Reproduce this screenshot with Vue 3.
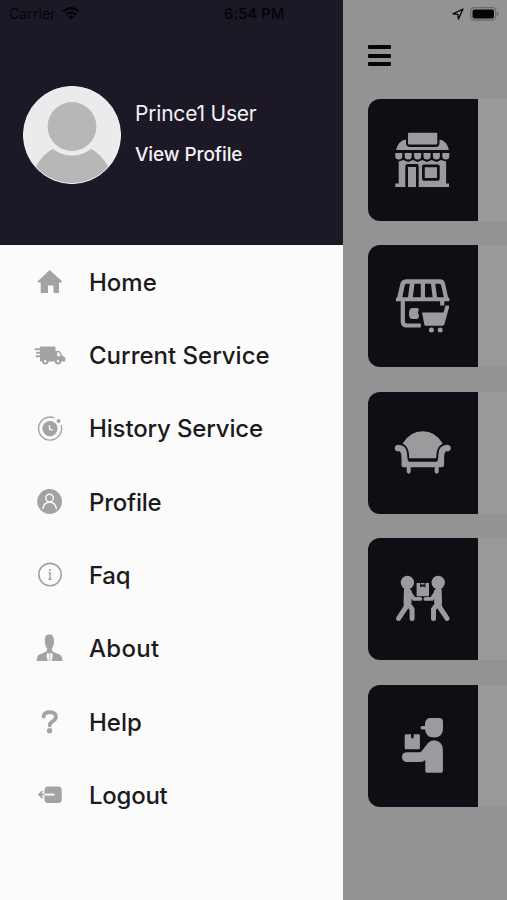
<template>
  <div class="screen">
    <div class="status-bar">
      <span class="carrier">Carrier</span>
      <svg class="wifi" viewBox="0 0 18 13">
        <path d="M1 4.6Q9-2.2 17 4.6M3.8 7.6Q9 3.2 14.2 7.6" fill="none" stroke="currentColor" stroke-width="2.4" />
        <path d="M5.9 9.6Q9 7.2 12.1 9.6L9 12.8z" fill="currentColor" />
      </svg>
      <span class="time">6:54 PM</span>
      <svg class="location" viewBox="0 0 12 12">
        <path d="M11 1L1 5.8l4.9.6.5 4.7z" fill="none" stroke="currentColor" stroke-width="1.3" stroke-linejoin="round" />
      </svg>
      <svg class="battery" viewBox="0 0 29 14">
        <rect x="0.7" y="0.7" width="25" height="12.4" rx="3.6" fill="none" stroke="#6a6a6a" stroke-width="1.2" />
        <rect x="2.5" y="2.4" width="21.5" height="9" rx="2" fill="currentColor" />
        <path d="M27 4.6q3 2.2 0 4.6z" fill="#6a6a6a" />
      </svg>
    </div>

    <aside class="drawer">
      <div class="drawer-header">
        <div class="avatar">
          <svg viewBox="0 0 96 96">
            <circle cx="48" cy="97" r="40" fill="#b6b7b9" />
            <circle cx="48" cy="39.500" r="29.300" fill="#e9ebec" />
            <circle cx="48" cy="39.500" r="24.400" fill="#b6b7b9" />
          </svg>
        </div>
        <div class="user-info">
          <div class="user-name">Prince1 User</div>
          <div class="view-profile">View Profile</div>
        </div>
      </div>

      <nav class="menu">
        <div v-for="item in menuItems" :key="item.name" class="menu-item">
          <svg class="menu-icon" viewBox="0 0 32 32">
            <g v-if="item.icon === 'home'">
              <path d="M15.7 4L27.7 15q.8 1.4-.7 1.6h-2V26q0 1-1 1h-4.500v-7.600h-5.500V27H7.700q-1 0-1-1v-9.400h-2Q3 16.300 4 15z" fill="#a3a3a5" />
            </g>
            <g v-else-if="item.icon === 'truck'">
              <path d="M6 7.500q0-1 1-1h13.500q1 0 1 1V11h4.200l3 5 2.300 1.300q.5.600.3 4.200H6z" fill="#a3a3a5" />
              <path d="M1.600 9.200h6M3 12.700h5M2.600 16.200h6" stroke="#a3a3a5" stroke-width="2.100" stroke-linecap="round" />
              <path d="M23.200 12.300h1.600l2 3.800h-3.600z" fill="#fbfbfb" />
              <g fill="#fbfbfb" stroke="#a3a3a5" stroke-width="2"><circle cx="11.300" cy="21.300" r="2.200" /><circle cx="24" cy="21.300" r="2.200" /></g>
            </g>
            <g v-else-if="item.icon === 'history'">
              <path d="M20.300 4.900A11.500 11.500 0 1 0 27 12" fill="none" stroke="#a3a3a5" stroke-width="1.400" />
              <circle cx="24.600" cy="8" r="1.900" fill="#a3a3a5" />
              <circle cx="16" cy="15.600" r="7.600" fill="#a3a3a5" />
              <path d="M15.500 12v4.200l3.300 1" fill="none" stroke="#fbfbfb" stroke-width="1.300" />
            </g>
            <g v-else-if="item.icon === 'profile'">
              <circle cx="15.600" cy="15.500" r="12.400" fill="#a3a3a5" />
              <g fill="none" stroke="#fbfbfb" stroke-width="1.400" stroke-linecap="round"><circle cx="15.600" cy="12" r="3.800" /><path d="M8.800 22.500q1-6.300 6.800-6.300t6.800 6.300" /></g>
            </g>
            <g v-else-if="item.icon === 'info'">
              <circle cx="16" cy="15.600" r="11.200" fill="none" stroke="#a3a3a5" stroke-width="1.600" />
              <circle cx="16" cy="11" r="1.100" fill="#a3a3a5" />
              <path d="M14.600 13.700H16v6.500M14.200 20.400h3.600" fill="none" stroke="#a3a3a5" stroke-width="1.400" />
            </g>
            <g v-else-if="item.icon === 'person'">
              <path d="M11.200 3.500Q13 1 16 1.800L17.300 1l.6 1.300q2.500 1.700 1.900 6.200 1 .5-.4 3.500-.3 2.200-1.600 3.200.2 3.500 2.400 4l6 2.600q2 1.500 2.200 6.200H2.700q.1-4.700 2.300-6.200l6-2.600q2.200-.7 2.200-4-1.500-1-1.800-3.200-1.300-2.500-.4-3.500-.5-3 .2-5z" fill="#a3a3a5" />
              <path d="M13.400 19.500l2.300 1.700 2.200-1.700.9 3.500-1.500 6h-3.300l-1.500-6z" fill="#fbfbfb" />
              <path d="M14.900 20.800h1.600l-.4 2 .6 4.500-1.100 1.500-1.100-1.500.7-4.500z" fill="#cfcfd1" />
            </g>
            <g v-else-if="item.icon === 'question'">
              <path d="M9.600 10.500q.6-4.300 6.100-4.300 6.200 0 6.200 4.600 0 2.700-3.300 4.500-2.900 1.600-2.900 4.100" fill="none" stroke="#a3a3a5" stroke-width="3.800" stroke-linecap="round" />
              <circle cx="15.600" cy="24.700" r="2.700" fill="#a3a3a5" />
            </g>
            <g v-else>
              <rect x="10.500" y="7.600" width="17.200" height="16.400" rx="3.500" fill="#a3a3a5" />
              <path d="M7 15.600h13.500" stroke="#fbfbfb" stroke-width="2" />
              <path d="M10.500 15.600H5M8.600 12.100L5 15.600l3.600 3.500" fill="none" stroke="#a3a3a5" stroke-width="1.700" />
            </g>
          </svg>
          <span class="menu-label" :class="item.icon">{{ item.name }}</span>
        </div>
      </nav>
    </aside>

    <main class="page">
      <div class="hamburger"><i></i><i></i><i></i></div>
      <div class="cards">
        <div v-for="card in cards" :key="card" class="card">
          <div class="card-icon">
            <svg viewBox="0 0 110 122">
              <g v-if="card === 'store'" fill="#9b9b9d">
                <path d="M38 40.500v3.500q0 4 4 4h25.500q4 0 4-4v-3.500q7 1 9.500 10.500H28q2.500-9.500 10-10.500z" />
                <rect x="40" y="33.800" width="29.300" height="11.600" rx="1" />
                <path d="M27.300 54h7v3a3.500 3.500 0 0 1-7 0zM36.700 54h7v3a3.500 3.500 0 0 1-7 0zM46.100 54h7v3a3.500 3.500 0 0 1-7 0zM55.500 54h7v3a3.500 3.500 0 0 1-7 0zM64.900 54h7v3a3.500 3.500 0 0 1-7 0zM74.300 54h7v3a3.500 3.500 0 0 1-7 0z" />
                <path d="M30.700 62.500l4.700-1.500 4.800 2 4.700-2 4.700 2 4.700-2 4.700 2 4.700-2 4.700 2 4.700-2 5 1.500v22H81V88H27.300v-3.500h3.400z" />
                <path d="M37.300 88V67q0-2 2-2h9.400q2 0 2 2v21z" fill="#0f0e14" />
                <rect x="54" y="65.500" width="17.700" height="16.200" rx="2" fill="#0f0e14" />
                <path d="M40 68h8v20h-8zM56.800 68.200h12.200v10.800H56.800z" />
              </g>
              <g v-else-if="card === 'shop'" fill="#9b9b9d">
                <path d="M39 34.200h33q4 0 5 4l3 13.800q2 1 1.300 4.300H28q-.8-3.300 1.300-4.300L32.500 38q1-3.800 6.500-3.800z" />
                <path d="M38.200 38.700h3.600L40 52.200h-5.700l2.400-11.700q.3-1.600 1.500-1.800zM46.500 38.700h6.300v13.500h-8zM57 38.700h6l1.600 13.500H57zM67.200 38.700h4q1.600.1 2 1.800l2.600 11.700h-6.700z" fill="#0f0e14" />
                <path d="M34.800 55v21.500q0 4 4 4h14M74.200 55v5.500" fill="none" stroke="#9b9b9d" stroke-width="4.200" />
                <path d="M44.500 63h4q2.500 0 2.500 2-2.200 2.500 0 5 0 4-2.500 4h-4q-3.500 0-3.500-5.500t3.500-5.500z" />
                <path d="M54 67.500h21.500l2-7h3.500v2l-4.500 16.500q-.5 1.700-2 1.700H58q-1.500 0-1.700-1.500z" />
                <circle cx="63.400" cy="85" r="2.500" /><circle cx="72.200" cy="85" r="2.500" />
              </g>
              <g v-else-if="card === 'sofa'" fill="#9b9b9d">
                <path d="M34.700 51.500Q42 39.300 54.700 39.300t20 12.200Q68 55 68.200 66.300h-27Q41.500 55 34.700 51.500z" />
                <path d="M30 52.800q9 0 9.200 10 .1 6.900 2 6.900h27.200q1.900 0 1.900-6.900.2-10 9.200-10 3.300.4 3.300 3.600-.7 3.200-4 2.900-2.500 0-2.700 5.700v8q0 2.300-2.300 2.300H70.700v5q-2 2.800-4 0v-5h-24v5q-2 2.800-4 0v-5h-3q-2.200 0-2.200-2.300v-8q-.2-5.700-2.800-5.700-3.300.4-4-2.900 0-3.200 3.300-3.600z" />
              </g>
              <g v-else-if="card === 'movers'" fill="#9b9b9d">
                <g v-for="side in [1, -1]" :key="side" :transform="side === 1 ? '' : 'translate(109.600 0) scale(-1 1)'">
                  <circle cx="39.400" cy="44.400" r="6.700" />
                  <path d="M36 50.500q4.500-2 7.500 2v13h-8z" />
                  <path d="M41 53.500l4.800 7.400h6.500" fill="none" stroke="#9b9b9d" stroke-width="3.800" stroke-linecap="round" stroke-linejoin="round" />
                  <path d="M38.800 64l-1 5.500L30.600 80.300M39.500 65l4.600 6.200v9.200" fill="none" stroke="#9b9b9d" stroke-width="5" stroke-linecap="round" stroke-linejoin="round" />
                </g>
                <path d="M48.600 45h3.600v4.400l2.600-1.100 2.600 1.100V45H61v13.300H48.600zM53 45h3.500v1.600H53z" />
              </g>
              <g v-else fill="#9b9b9d">
                <path d="M61 33h10q4 0 4 4v6.500q0 9-9 9-8 0-9-8h-2.700q-1.800 0-1.800-1.700T54.300 41H57v-2.500Q57.500 34 61 33z" />
                <path d="M36.700 50.500q0-1.200 1.200-1.200H43v3.200l1.300 1.200 1.400-1.200v-3.200h5q1.200 0 1.200 1.200v12.600q0 1.200-1.200 1.200H37.900q-1.200 0-1.200-1.200z" />
                <path d="M38.500 67.200H51q2 0 3-1.500l6-7.700q2.500-2.700 6-2.700 8.900 1 8.900 9.700v21q0 1.700-1.700 1.700H59q-1.700 0-1.700-1.700V75q-2 2-5 2H38.500Q34 76.500 34 72t4.500-4.800z" />
              </g>
            </svg>
          </div>
        </div>
      </div>
    </main>
  </div>
</template>

<script setup>
const menuItems = [
  { name: 'Home', icon: 'home' },
  { name: 'Current Service', icon: 'truck' },
  { name: 'History Service', icon: 'history' },
  { name: 'Profile', icon: 'profile' },
  { name: 'Faq', icon: 'info' },
  { name: 'About', icon: 'person' },
  { name: 'Help', icon: 'question' },
  { name: 'Logout', icon: 'logout' }
];

const cards = ['store', 'shop', 'sofa', 'movers', 'delivery'];
</script>

<style scoped>
.screen { position: relative; display: flex; width: 507px; height: 900px; overflow: hidden; background: #939393; font-family: Inter, "Liberation Sans", sans-serif; }
.status-bar { position: absolute; z-index: 2; top: 0; left: 0; width: 507px; height: 27px; box-sizing: border-box; padding: 0 8px 0 9px; display: flex; align-items: center; color: #050508; }
.carrier { width: 47px; font-size: 14.2px; white-space: nowrap; }
.wifi { width: 18px; height: 13px; margin-left: 6px; }
.time { margin-left: 144px; width: 62px; font-size: 14.5px; font-weight: 600; letter-spacing: 0.2px; white-space: nowrap; }
.location { width: 12px; height: 12px; margin-left: auto; }
.battery { width: 29px; height: 14px; margin-left: 6px; }

.drawer { width: 343px; flex-shrink: 0; background: #fbfbfb; }
.drawer-header { height: 245px; box-sizing: border-box; padding: 86px 0 0 23px; display: flex; align-items: flex-start; background: #1c1825; color: #f2f1f4; }
.avatar { width: 98px; height: 98px; box-sizing: border-box; border: 1px solid #f8f8fa; border-radius: 50%; overflow: hidden; background: #e9ebec; }
.avatar svg { display: block; width: 96px; height: 96px; }
.user-info { margin-left: 14px; padding-top: 15px; white-space: nowrap; }
.user-name { font-size: 21px; line-height: 26px; letter-spacing: -0.2px; }
.view-profile { margin-top: 15px; font-size: 19px; line-height: 26px; font-weight: 500; letter-spacing: -0.1px; }

.menu { padding-top: 0.6px; }
.menu-item { height: 73.3px; padding-left: 34px; display: flex; align-items: center; gap: 23px; }
.menu-icon { width: 32px; height: 32px; flex-shrink: 0; }
.menu-label { font-size: 24px; font-weight: 500; color: #1b1b1d; white-space: nowrap; }
.menu-label.history { letter-spacing: -0.15px; }
.menu-label.profile, .menu-label.logout { letter-spacing: -0.25px; }
.menu-label.info { letter-spacing: -0.3px; }
.menu-label.person { letter-spacing: 0.3px; }

.page { flex: 1; padding: 45px 0 0 25px; }
.hamburger { display: flex; flex-direction: column; justify-content: space-between; width: 23px; height: 21px; }
.hamburger i { height: 4px; border-radius: 1px; background: #050507; }
.cards { display: flex; flex-direction: column; gap: 24.6px; margin-top: 32.6px; }
.card { height: 122px; border-radius: 12px 0 0 12px; background: #999; }
.card-icon { width: 110px; height: 122px; border-radius: 12px 0 0 12px; background: #0f0e14; }
.card-icon svg { display: block; width: 110px; height: 122px; }
</style>

<style>
body { margin: 0; background: #939393; }
</style>
